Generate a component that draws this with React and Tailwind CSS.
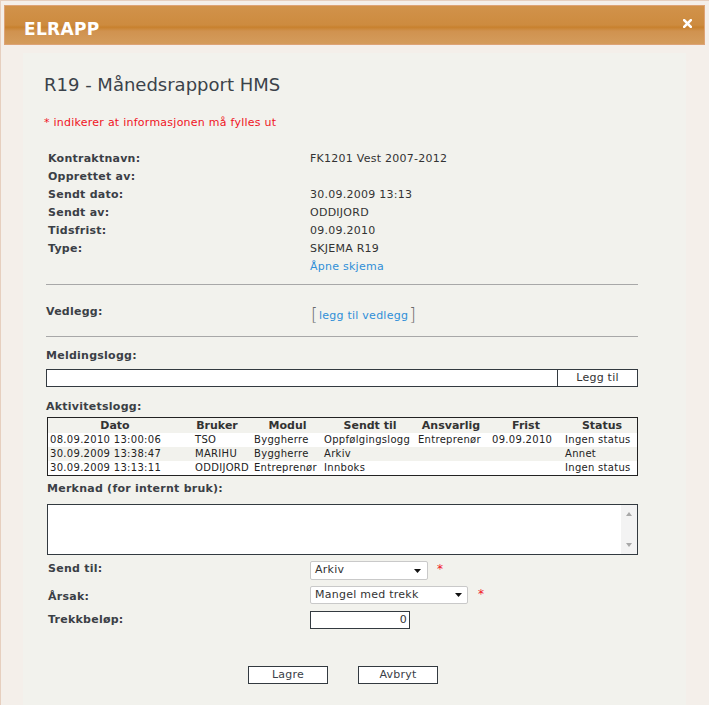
function Select({ value, width, pr }) {
  return (
    <div
      className={`${width} h-full flex items-center justify-between bg-white border border-[#c9c9c9] rounded-[2px] pl-[4px] ${pr} text-[#333] text-[11px]`}
    >
      <span>{value}</span>
      <svg width="7" height="4" viewBox="0 0 7 4">
        <path d="M0 0 H7 L3.5 4 Z" fill="#111" />
      </svg>
    </div>
  );
}

const headers = [
  "Dato",
  "Bruker",
  "Modul",
  "Sendt til",
  "Ansvarlig",
  "Frist",
  "Status",
];

const rows = [
  ["08.09.2010 13:00:06", "TSO", "Byggherre", "Oppfølgingslogg", "Entreprenør", "09.09.2010", "Ingen status"],
  ["30.09.2009 13:38:47", "MARIHU", "Byggherre", "Arkiv", "", "", "Annet"],
  ["30.09.2009 13:13:11", "ODDIJORD", "Entreprenør", "Innboks", "", "", "Ingen status"],
];

export default function App() {
  return (
    <div className="w-[709px] h-[705px] overflow-hidden bg-[#f4efea] border-l border-t border-[#e6cfbf] pl-[3px] pr-[4px] pt-[4px] font-['DejaVu_Sans',Verdana,sans-serif] text-[11px] tracking-[0.25px] text-[#333]">
      {/* Header bar */}
      <div className="h-[40px] border border-[#dda376] bg-[linear-gradient(to_bottom,#d1924a_0%,#cd8b3f_50%,#c8812e_56%,#d0924f_66%,#d49c5c_100%)] flex items-center justify-between pl-[19px] pr-[12px]">
        <span className="text-white font-bold text-[17px] leading-[20px] mt-[7px] tracking-[0.3px]">ELRAPP</span>
        <svg width="9" height="9" viewBox="0 0 9 9" className="-mt-[3px]">
          <path d="M1.2 1.2 L7.8 7.8 M7.8 1.2 L1.2 7.8" stroke="#fff" strokeWidth="2.6" strokeLinecap="square" />
        </svg>
      </div>

      {/* Panel */}
      <div className="ml-[19px] mr-[19px] mt-[8px] h-[660px] bg-[#f2f2ed] pl-[23px] pt-[21px]">
        <div className="w-[592px]">
          <div className="-ml-[2px] text-[18px] leading-[22px] tracking-normal text-[#3b424a]">R19 - Månedsrapport HMS</div>
          <div className="-ml-[2px] mt-[20px] leading-[14px] text-[#f0141e]">* indikerer at informasjonen må fylles ut</div>

          <div className="ml-[2px] mt-[20px] grid grid-cols-[262px_1fr] leading-[18px]">
            <div className="font-bold text-[#3b3f46]">Kontraktnavn:</div>
            <div>FK1201 Vest 2007-2012</div>
            <div className="font-bold text-[#3b3f46]">Opprettet av:</div>
            <div></div>
            <div className="font-bold text-[#3b3f46]">Sendt dato:</div>
            <div>30.09.2009 13:13</div>
            <div className="font-bold text-[#3b3f46]">Sendt av:</div>
            <div>ODDIJORD</div>
            <div className="font-bold text-[#3b3f46]">Tidsfrist:</div>
            <div>09.09.2010</div>
            <div className="font-bold text-[#3b3f46]">Type:</div>
            <div>SKJEMA R19</div>
            <div></div>
            <div className="text-[#2f8fd8]">Åpne skjema</div>
          </div>

          <div className="mt-[8px] h-px bg-[#a8a8a8]" />

          <div className="h-[51px] flex items-start pt-[20px]">
            <div className="w-[264px] font-bold leading-[14px] text-[#3b3f46]">Vedlegg:</div>
            <div className="mt-[1px] flex items-center h-[18px] ml-[1px]">
              <span className="text-[17px] leading-[18px] text-[#6a6a6a] font-light">[</span>
              <span className="text-[#2f8fd8] leading-[14px] mt-[2px] ml-[1px]">legg til vedlegg</span>
              <span className="text-[17px] leading-[18px] text-[#6a6a6a] font-light ml-[1px]">]</span>
            </div>
          </div>

          <div className="h-px bg-[#a8a8a8]" />

          <div className="mt-[12px] font-bold leading-[14px] text-[#3b3f46]">Meldingslogg:</div>
          <div className="mt-[6px] flex h-[18px]">
            <div className="w-[512px] border border-[#333a40] bg-white" />
            <div className="w-[80px] border border-l-0 border-[#333a40] bg-white flex items-center justify-center text-[#333]">Legg til</div>
          </div>

          <div className="mt-[13px] font-bold leading-[14px] text-[#3b3f46]">Aktivitetslogg:</div>
          <div className="mt-[3px] ml-[1px] w-[591px] border border-[#222]">
            <div className="grid grid-cols-[134px_70px_71px_94px_68px_82px_70px] h-[15px] items-center font-bold text-[#333] text-[11px] leading-[15px] tracking-normal">
              {headers.map((h) => (
                <div key={h} className="text-center">{h}</div>
              ))}
            </div>
            {rows.map((r, i) => (
              <div
                key={i}
                className={`grid grid-cols-[145px_59px_70px_94px_74px_73px_74px] h-[14px] items-center text-[10px] leading-[14px] tracking-[0.3px] text-[#222] ${i === 1 ? "bg-[#f2f2ed]" : "bg-white"}`}
              >
                {r.map((c, j) => (
                  <div key={j} className="pl-[2px] whitespace-nowrap">{c}</div>
                ))}
              </div>
            ))}
          </div>

          <div className="mt-[6px] ml-[1px] font-bold leading-[14px] text-[#3b3f46]">Merknad (for internt bruk):</div>
          <div className="mt-[8px] ml-[1px] w-[591px] h-[51px] border border-[#333a40] bg-white flex justify-end">
            <div className="w-[16px] h-full bg-[#f3f3f3] flex flex-col items-center justify-between py-[7px]">
              <svg width="6" height="4" viewBox="0 0 6 4"><path d="M0 4 L3 0 L6 4 Z" fill="#a8a8a8" /></svg>
              <svg width="6" height="4" viewBox="0 0 6 4"><path d="M0 0 L6 0 L3 4 Z" fill="#a8a8a8" /></svg>
            </div>
          </div>

          <div className="mt-[6px] flex items-start h-[19px]">
            <div className="ml-[2px] w-[262px] mt-[1px] font-bold leading-[14px] text-[#3b3f46]">Send til:</div>
            <Select value="Arkiv" width="w-[118px]" pr="pr-[6px]" />
            <span className="ml-[9px] mt-[1px] text-[#f0141e] text-[12px] leading-[14px]">*</span>
          </div>

          <div className="mt-[6px] flex items-start h-[18px]">
            <div className="ml-[2px] w-[262px] mt-[4px] font-bold leading-[14px] text-[#3b3f46]">Årsak:</div>
            <Select value="Mangel med trekk" width="w-[158px]" pr="pr-[5px]" />
            <span className="ml-[10px] mt-[1px] text-[#f0141e] text-[12px] leading-[14px]">*</span>
          </div>

          <div className="mt-[7px] flex items-start h-[18px]">
            <div className="ml-[2px] w-[262px] mt-[2px] font-bold leading-[14px] text-[#3b3f46]">Trekkbeløp:</div>
            <div className="w-[100px] h-full border border-[#333a40] bg-white flex items-center justify-end pr-[2px] text-[#333]">0</div>
          </div>

          <div className="mt-[37px] ml-[2px] flex justify-center gap-[30px]">
            <div className="w-[80px] h-[18px] border border-[#333a40] bg-white flex items-center justify-center text-[#3a4048]">Lagre</div>
            <div className="w-[80px] h-[18px] border border-[#333a40] bg-white flex items-center justify-center text-[#3a4048]">Avbryt</div>
          </div>
        </div>
      </div>
    </div>
  );
}
